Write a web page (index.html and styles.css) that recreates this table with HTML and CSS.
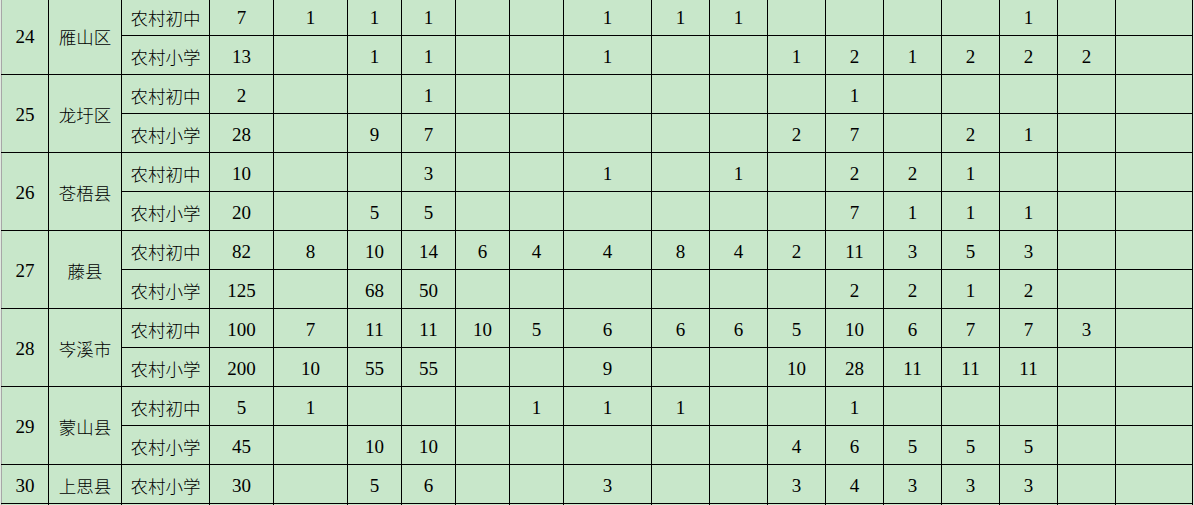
FILE: index.html
```html
<!DOCTYPE html>
<html lang="zh-CN">
<head>
<meta charset="utf-8">
<title>农村学校教师需求统计</title>
<link rel="stylesheet" href="styles.css">
</head>
<body>
<div class="sheet">
<table class="grid">
<colgroup>
<col class="w-no"><col class="w-area"><col class="w-type"><col class="w-total">
<col class="w-c1"><col class="w-s"><col class="w-s"><col class="w-s"><col class="w-s">
<col class="w-c6"><col class="w-m"><col class="w-m"><col class="w-m"><col class="w-m">
<col class="w-m"><col class="w-m"><col class="w-m"><col class="w-m"><col class="w-last">
</colgroup>
<tbody>
<tr><td rowspan="2">24</td><td rowspan="2" class="zh">雁山区</td><td class="zh">农村初中</td><td>7</td><td>1</td><td>1</td><td>1</td><td></td><td></td><td>1</td><td>1</td><td>1</td><td></td><td></td><td></td><td></td><td>1</td><td></td><td></td></tr>
<tr><td class="zh">农村小学</td><td>13</td><td></td><td>1</td><td>1</td><td></td><td></td><td>1</td><td></td><td></td><td>1</td><td>2</td><td>1</td><td>2</td><td>2</td><td>2</td><td></td></tr>
<tr><td rowspan="2">25</td><td rowspan="2" class="zh">龙圩区</td><td class="zh">农村初中</td><td>2</td><td></td><td></td><td>1</td><td></td><td></td><td></td><td></td><td></td><td></td><td>1</td><td></td><td></td><td></td><td></td><td></td></tr>
<tr><td class="zh">农村小学</td><td>28</td><td></td><td>9</td><td>7</td><td></td><td></td><td></td><td></td><td></td><td>2</td><td>7</td><td></td><td>2</td><td>1</td><td></td><td></td></tr>
<tr><td rowspan="2">26</td><td rowspan="2" class="zh">苍梧县</td><td class="zh">农村初中</td><td>10</td><td></td><td></td><td>3</td><td></td><td></td><td>1</td><td></td><td>1</td><td></td><td>2</td><td>2</td><td>1</td><td></td><td></td><td></td></tr>
<tr><td class="zh">农村小学</td><td>20</td><td></td><td>5</td><td>5</td><td></td><td></td><td></td><td></td><td></td><td></td><td>7</td><td>1</td><td>1</td><td>1</td><td></td><td></td></tr>
<tr><td rowspan="2">27</td><td rowspan="2" class="zh">藤县</td><td class="zh">农村初中</td><td>82</td><td>8</td><td>10</td><td>14</td><td>6</td><td>4</td><td>4</td><td>8</td><td>4</td><td>2</td><td>11</td><td>3</td><td>5</td><td>3</td><td></td><td></td></tr>
<tr><td class="zh">农村小学</td><td>125</td><td></td><td>68</td><td>50</td><td></td><td></td><td></td><td></td><td></td><td></td><td>2</td><td>2</td><td>1</td><td>2</td><td></td><td></td></tr>
<tr><td rowspan="2">28</td><td rowspan="2" class="zh">岑溪市</td><td class="zh">农村初中</td><td>100</td><td>7</td><td>11</td><td>11</td><td>10</td><td>5</td><td>6</td><td>6</td><td>6</td><td>5</td><td>10</td><td>6</td><td>7</td><td>7</td><td>3</td><td></td></tr>
<tr><td class="zh">农村小学</td><td>200</td><td>10</td><td>55</td><td>55</td><td></td><td></td><td>9</td><td></td><td></td><td>10</td><td>28</td><td>11</td><td>11</td><td>11</td><td></td><td></td></tr>
<tr><td rowspan="2">29</td><td rowspan="2" class="zh">蒙山县</td><td class="zh">农村初中</td><td>5</td><td>1</td><td></td><td></td><td></td><td>1</td><td>1</td><td>1</td><td></td><td></td><td>1</td><td></td><td></td><td></td><td></td><td></td></tr>
<tr><td class="zh">农村小学</td><td>45</td><td></td><td>10</td><td>10</td><td></td><td></td><td></td><td></td><td></td><td>4</td><td>6</td><td>5</td><td>5</td><td>5</td><td></td><td></td></tr>
<tr><td>30</td><td class="zh">上思县</td><td class="zh">农村小学</td><td>30</td><td></td><td>5</td><td>6</td><td></td><td></td><td>3</td><td></td><td></td><td>3</td><td>4</td><td>3</td><td>3</td><td>3</td><td></td><td></td></tr>
<tr><td></td><td></td><td></td><td></td><td></td><td></td><td></td><td></td><td></td><td></td><td></td><td></td><td></td><td></td><td></td><td></td><td></td><td></td><td></td></tr>
</tbody>
</table>
</div>
</body>
</html>
```
FILE: styles.css
```css
html, body {
  margin: 0;
  padding: 0;
  background: #c8e7ca;
}

.sheet {
  width: 1194px;
  height: 505px;
  overflow: hidden;
  padding-left: 1px;
  box-sizing: border-box;
  background: #dfe9df;
}

.grid {
  border-collapse: collapse;
  table-layout: fixed;
  width: 1191px;
  margin-top: -4px;
  background: #c8e7ca;
  font-family: "Liberation Serif", "Noto Sans CJK SC", serif;
  font-size: 19px;
  color: #000;
}

.grid td {
  border: 1px solid #000;
  height: 39px;
  padding: 3px 0 0;
  box-sizing: border-box;
  text-align: center;
  vertical-align: middle;
  line-height: 20px;
  white-space: nowrap;
  overflow: hidden;
}

.grid tr td:first-child[rowspan],
.grid tr:nth-child(13) td:first-child,
.grid tr:nth-child(14) td:first-child {
  border-left-color: #a7a7a7;
}

.grid td.zh {
  font-family: "Noto Sans CJK SC", sans-serif;
  font-size: 17.5px;
  font-weight: 300;
}

.w-no { width: 47px; }
.w-area { width: 73px; }
.w-type { width: 88px; }
.w-total { width: 64px; }
.w-c1 { width: 74px; }
.w-s { width: 54px; }
.w-c6 { width: 88px; }
.w-m { width: 58px; }
.w-last { width: 77px; }
```
